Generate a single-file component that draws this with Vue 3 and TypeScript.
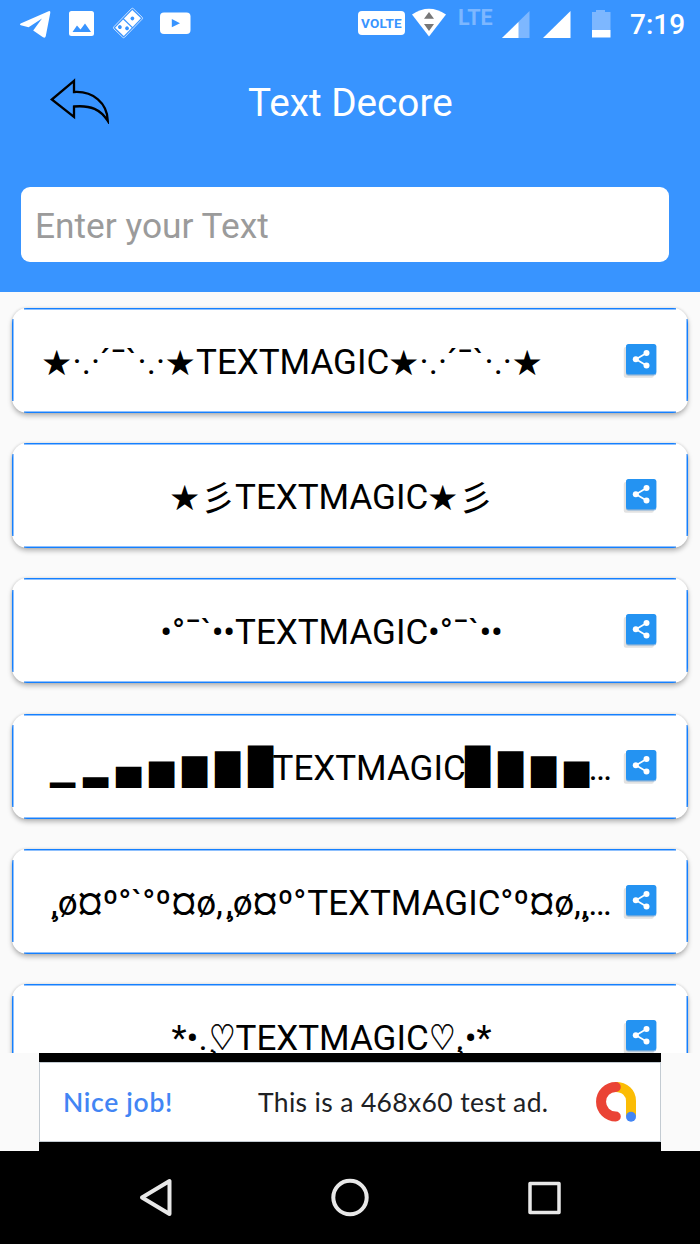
<script setup lang="ts">
interface Segment {
  text: string
  width: number
  kind?: 'star' | 'kana' | 'block' | 'heart'
}

const MAGIC: Segment = { text: 'TEXTMAGIC', width: 193 }
const star: Segment = { text: '★', width: 30.5, kind: 'star' }
const wave: Segment[] = [
  { text: '·', width: 9.2 },
  { text: '.', width: 9.2 },
  { text: '·', width: 8.6 },
  { text: '´', width: 10.6 },
  { text: '¯', width: 15.9 },
  { text: '`', width: 11.5 },
  { text: '·', width: 9.2 },
  { text: '.', width: 9.2 },
  { text: '·', width: 9.6 },
]
const kana: Segment = { text: '彡', width: 34.5, kind: 'kana' }
const dots: Segment[] = [
  { text: '•', width: 11.7 },
  { text: '°', width: 13 },
  { text: '¯', width: 15.9 },
  { text: '`', width: 10.8 },
  { text: '•', width: 11.7 },
  { text: '•', width: 11.7 },
]
const block = (text: string, width = 33): Segment => ({ text, width, kind: 'block' })
const cedilla: Segment = { text: '¸', width: 0 }
const heart: Segment = { text: '♡', width: 27, kind: 'heart' }

const rows: Segment[][] = [
  [star, ...wave, star, MAGIC, star, ...wave, star, { text: ' ', width: 78 }],
  [star, kana, MAGIC, star, kana],
  [...dots, MAGIC, ...dots],
  [
    block('▁'), block('▂'), block('▄'), block('▅'), block('▆'), block('▇'), block('█', 25),
    { text: 'TEXTMAGIC', width: 192 },
    block('█'), block('▇'), block('▆'), block('▅', 25),
    { text: '…', width: 25 },
  ],
  [
    cedilla,
    { text: ',ø¤º°`°º¤ø,', width: 175 },
    cedilla,
    { text: ',ø¤º°', width: 81.5 },
    MAGIC,
    { text: '°º¤ø,', width: 81 },
    cedilla,
    { text: ',…', width: 31 },
  ],
  [
    { text: '*•.', width: 37 },
    cedilla,
    heart,
    MAGIC,
    heart,
    cedilla,
    { text: '.•*', width: 36 },
  ],
]
</script>

<template>
  <div class="screen">
    <header class="top">
      <div class="status">
        <svg class="status-left" width="200" height="46" viewBox="0 0 200 46">
          <path fill="#fff" d="M20.6 23.6 48.6 11.2Q50.6 10.6 50.3 12.8L45.8 36Q45.2 38.6 43 37.2L33.2 30.4 42 18.6 28.6 27.2 20.8 25.2Q19 24.6 20.6 23.6Z" />
          <path fill="#fff" fill-rule="evenodd" d="M71.500 11H91.500Q94 11 94 13.500V33.500Q94 36 91.500 36H71.500Q69 36 69 33.500V13.500Q69 11 71.500 11ZM72.500 32H91L85 23.500 80.500 29.500 77 25.500Z" />
          <g transform="translate(128 23) rotate(-46)">
            <rect x="-14" y="-7.500" width="28" height="15" rx="1.500" fill="none" stroke="#cfe4ff" stroke-width=".9" />
            <rect x="-12.300" y="-6" width="11.500" height="12" fill="#fff" />
            <rect x=".4" y="-6" width="12" height="12" fill="#fff" />
            <circle cx="-8.600" cy="-3" r="1.900" fill="#3894ff" />
            <circle cx="-4.500" cy="3" r="1.900" fill="#3894ff" />
            <circle cx="6.300" cy="0" r="1.900" fill="#3894ff" />
          </g>
          <rect x="160" y="12.500" width="30.500" height="21.500" rx="4" fill="#fff" />
          <path fill="#3894ff" d="M171.800 19V27.200L180 23.200Z" />
        </svg>
        <div class="status-right">
          <span class="volte">VOLTE</span>
          <svg class="wifi" width="36" height="46" viewBox="0 0 36 46">
            <path fill="#fff" d="M1 14.500Q18 3 35 14.500L18 36.500Z" />
            <path fill="#777" d="M13 18.800 18 12 23 18.800ZM13 24H23L18 31Z" />
          </svg>
          <span class="lte">LTE</span>
          <svg width="120" height="46" viewBox="0 0 120 46">
            <path fill="#7db7ff" d="M37.500 11V38H10Z" />
            <path fill="#fff" d="M26.500 22V38H10Z" />
            <path fill="#fff" d="M78.500 11V38H51Z" />
            <path fill="#7db7ff" d="M100 12H104V10H113V12H118.500V30H100Z" />
            <path fill="#fff" d="M100 30H118.500V37.500H100Z" />
          </svg>
          <span class="clock">7:19</span>
        </div>
      </div>
      <div class="title-bar">
        <svg class="back" width="62" height="46" viewBox="0 0 62 46">
          <path fill="none" stroke="#000" stroke-width="2.300" d="M25 2.800 2.800 21.500 25 39V28.500C42 27 51.500 31.500 58.800 43C58.500 25 44 12.800 25 14Z" />
        </svg>
        <h1>Text Decore</h1>
      </div>
      <div class="field">Enter your Text</div>
    </header>

    <main class="list">
      <article v-for="(row, i) in rows" :key="i" class="card">
        <div class="label">
          <span
            v-for="(seg, j) in row"
            :key="j"
            class="seg"
            :class="seg.kind"
            :style="{ width: seg.width + 'px' }"
          ><span class="glyph">{{ seg.text }}</span></span>
        </div>
        <svg class="share" width="34" height="36" viewBox="0 0 34 36">
          <rect x=".8" y="4" width="30" height="30.700" rx="2" fill="#e2e2e2" />
          <rect x="3" y="1.500" width="30.300" height="31" rx="2.500" fill="#1c79cf" opacity=".5" />
          <rect x="3" y="1" width="30.300" height="30.300" rx="2.500" fill="#2493f2" />
          <path d="M23.500 10 13 16.300 23.500 22.500" fill="none" stroke="#fff" stroke-width="1.700" />
          <circle cx="23.500" cy="10" r="3" fill="#fff" />
          <circle cx="12.800" cy="16.300" r="3" fill="#fff" />
          <circle cx="23.500" cy="22.600" r="3" fill="#fff" />
        </svg>
      </article>
    </main>

    <section class="ad-slot">
      <div class="ad">
        <div class="ad-body">
          <span class="ad-lead">Nice job!</span>
          <span class="ad-text">This is a 468x60 test ad.</span>
          <svg class="ad-logo" width="42" height="42" viewBox="0 0 42 42">
            <path d="M20.500 6C30 6 36 12 36 20V35" fill="none" stroke="#fbbc04" stroke-width="10" />
            <path d="M20.800 6A14.700 14.700 0 0 0 20.800 35.500" fill="none" stroke="#ea4335" stroke-width="10" stroke-linecap="round" />
            <circle cx="36" cy="35.700" r="5" fill="#4285f4" />
          </svg>
        </div>
      </div>
    </section>

    <nav class="nav">
      <svg width="700" height="93" viewBox="0 0 700 93" fill="none" stroke="#e8e8e8" stroke-width="4" stroke-linejoin="round">
        <path d="M142 46.500 169.500 30V63Z" />
        <circle cx="350" cy="46.500" r="16.700" />
        <rect x="530" y="32.500" width="29" height="29" stroke-width="3.500" />
      </svg>
    </nav>
  </div>
</template>

<style>
body {
  margin: 0;
}
</style>

<style scoped>
.screen {
  width: 700px;
  height: 1244px;
  display: flex;
  flex-direction: column;
  overflow: hidden;
  background: #fafafa;
  font-family: Roboto, "Noto Sans", sans-serif;
}
.top {
  height: 292px;
  flex: none;
  background: #3894ff;
  color: #fff;
}
.status {
  height: 46px;
  display: flex;
  justify-content: space-between;
}
.status svg {
  display: block;
  flex: none;
}
.status-right {
  display: flex;
  width: 342px;
}
.volte {
  width: 47px;
  height: 24px;
  margin-top: 11px;
  border-radius: 4px;
  background: #fff;
  color: #3894ff;
  font: 700 13.500px/25px Roboto, sans-serif;
  letter-spacing: 0.200px;
  text-align: center;
  flex: none;
}
.wifi {
  margin-left: 6px;
}
.lte {
  width: 34px;
  margin-left: 11px;
  padding-top: 5px;
  color: #7db7ff;
  font: 700 21.500px/26px Roboto, sans-serif;
  flex: none;
}
.clock {
  margin-left: 18px;
  font: 500 28px/49px Roboto, sans-serif;
}
.title-bar {
  display: flex;
  height: 113px;
  padding-left: 49px;
}
.back {
  margin-top: 32px;
  flex: none;
}
h1 {
  margin: 34px 0 0 137px;
  font-size: 38.700px;
  line-height: 46px;
  font-weight: 400;
  white-space: nowrap;
}
.field {
  box-sizing: border-box;
  width: 648px;
  height: 75px;
  margin: 27.500px 0 0 21px;
  padding-left: 14px;
  border-radius: 9px;
  background: #fff;
  color: #9b9b9b;
  font-size: 35.300px;
  line-height: 79px;
}
.list {
  height: 761px;
  flex: none;
  box-sizing: border-box;
  overflow: hidden;
  padding: 15.600px 12px 0;
  display: flex;
  flex-direction: column;
  gap: 30.350px;
}
.card {
  --edge: #1480ff 50%, #8fc0fd 50%;
  height: 105px;
  flex: none;
  box-sizing: border-box;
  padding: 0 30px 0 23px;
  display: flex;
  border-radius: 15px;
  background:
    linear-gradient(to bottom, var(--edge)) no-repeat 50% 0 / calc(100% - 24px) 2px,
    linear-gradient(to top, var(--edge)) no-repeat 50% 100% / calc(100% - 24px) 2px,
    linear-gradient(to right, var(--edge)) no-repeat 0 50% / 2px calc(100% - 23px),
    linear-gradient(to left, var(--edge)) no-repeat 100% 50% / 2px calc(100% - 23px),
    #fff;
  box-shadow: 0 3px 5px rgba(0, 0, 0, 0.26), 0 0 3px rgba(0, 0, 0, 0.14);
}
.label {
  width: 593px;
  display: flex;
  justify-content: center;
  color: #000;
  font-size: 35px;
  line-height: 109px;
  white-space: pre;
  flex: none;
}
.seg {
  height: 105px;
  flex: none;
}
.glyph {
  display: inline-block;
  height: 105px;
}
.star .glyph {
  font-family: "DejaVu Sans", sans-serif;
  transform: translate(-1px, 1px);
}
.kana .glyph {
  font-family: "Noto Sans CJK JP", sans-serif;
  transform: translateY(-2px);
}
.block .glyph,
.heart .glyph {
  font-family: "DejaVu Sans", sans-serif;
  transform-origin: 0 80px;
}
.block .glyph {
  transform: translateY(-0.500px) scale(0.930, 1.020);
}
.heart .glyph {
  transform: scaleX(0.850);
  -webkit-text-stroke: 0.600px #000;
}
.share {
  margin: 35px 0 0 -5px;
  flex: none;
}
.ad-slot {
  height: 98px;
  flex: none;
  display: flex;
  justify-content: center;
}
.ad {
  width: 622px;
  background: #000;
}
.ad-body {
  box-sizing: border-box;
  height: 80px;
  margin-top: 9px;
  padding: 0 23px;
  display: flex;
  align-items: center;
  border: 1px solid #c3cbd2;
  background: #fff;
  font-family: Lato, sans-serif;
  font-size: 26.500px;
}
.ad-lead {
  width: 195px;
  color: #4285f4;
  font-weight: 600;
  letter-spacing: 0.700px;
  white-space: nowrap;
}
.ad-text {
  width: 337px;
  color: #202124;
  letter-spacing: 0.350px;
  white-space: nowrap;
}
.ad-logo {
  flex: none;
}
.nav {
  height: 93px;
  flex: none;
  background: #000;
}
.nav svg {
  display: block;
}
</style>
